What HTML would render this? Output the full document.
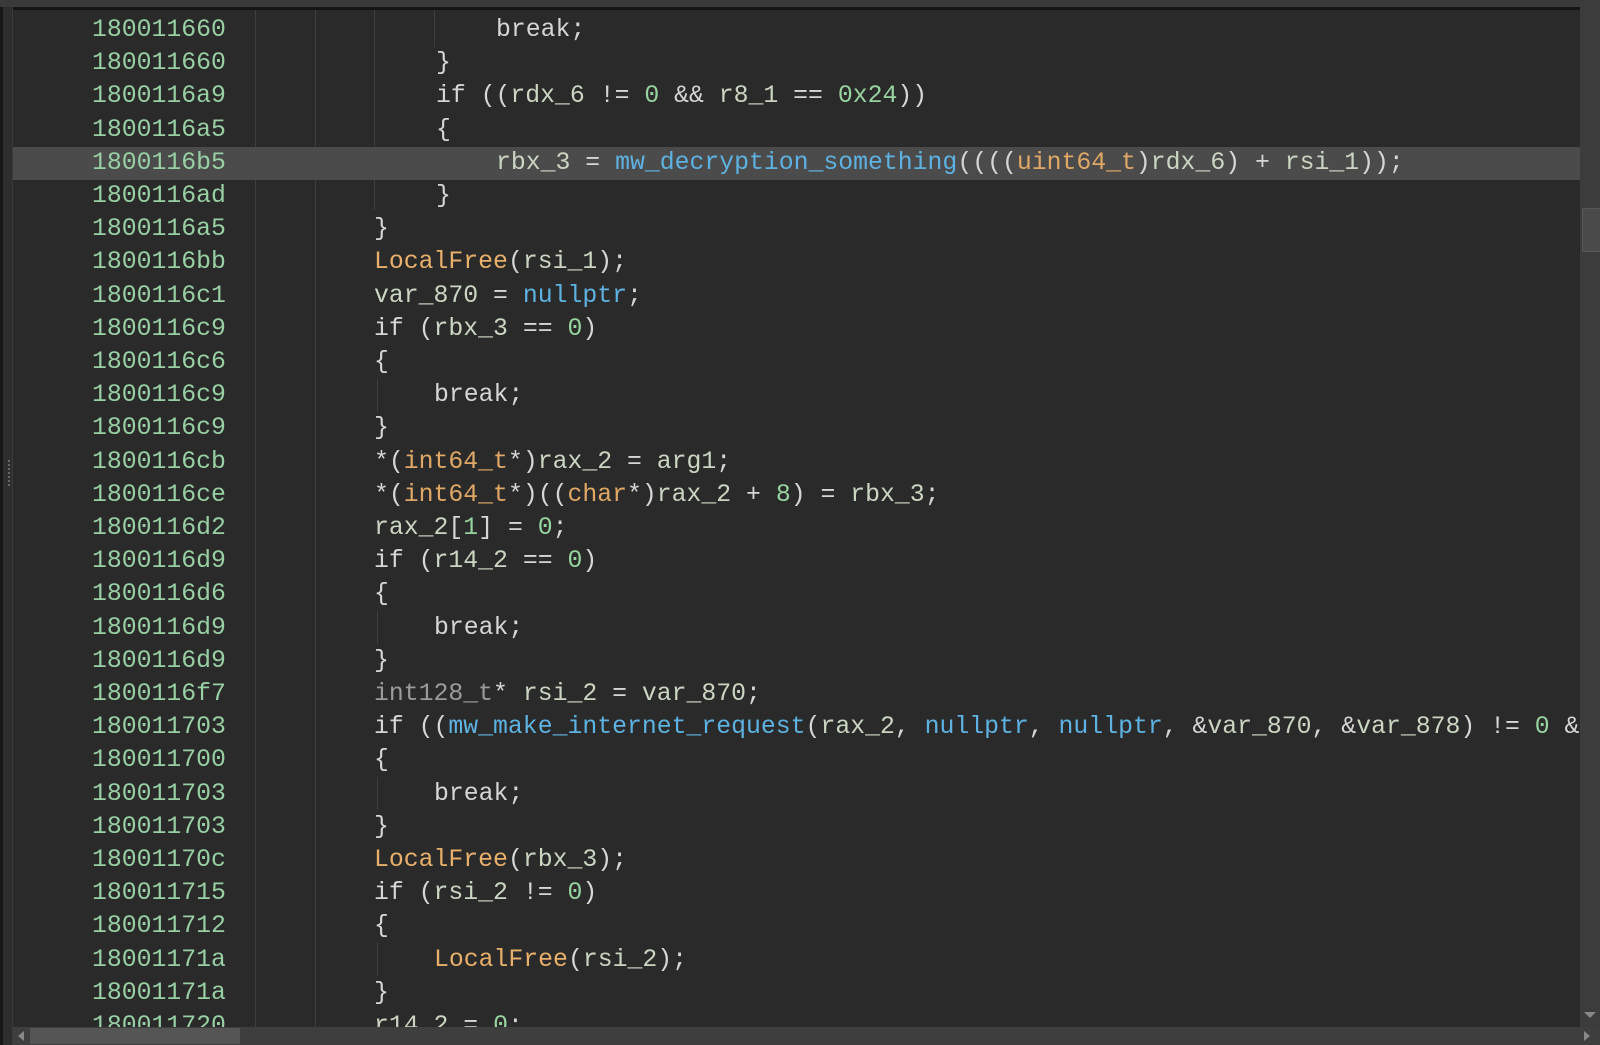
<!DOCTYPE html>
<html><head><meta charset="utf-8"><style>
html,body{margin:0;padding:0;width:1600px;height:1045px;overflow:hidden;background:#2a2a2a;}
body{position:relative;font-family:"Liberation Mono","DejaVu Sans Mono",monospace;font-size:24.8px;}
.top{position:absolute;left:0;top:0;width:1600px;height:7px;background:#3a3a3a;}
.topl{position:absolute;left:13px;top:7px;width:1567px;height:3px;background:#151515;}
.ls{position:absolute;left:0;top:0;width:3px;height:1045px;background:#161616;}
.ls2{position:absolute;left:3px;top:0;width:9px;height:1045px;background:#2e2e2e;}
.ls3{position:absolute;left:12px;top:0;width:1px;height:1045px;background:#3a3a3a;}
.grip{position:absolute;left:8px;top:460px;width:2px;height:28px;background:repeating-linear-gradient(#666 0 2px,transparent 2px 4px);}
.wrap{position:absolute;left:0;top:3px;width:1600px;height:1024px;}
.row{position:absolute;left:13px;width:1567px;height:33.2px;line-height:33.2px;white-space:pre;color:#d6d6d6;}
.hl{background:#4b4b4b;}
.a{position:absolute;left:79px;color:#98d0a4;}
.c{position:absolute;}
.g{position:absolute;width:1px;background:#3f3f3f;}
.v{color:#cad6c2}.n{color:#98d4a0}.t{color:#e0a866}.f{color:#e8b06a}.b{color:#5eb2e2}.gr{color:#9a9a9a}
.rsb{position:absolute;left:1580px;top:0;width:20px;height:1027px;background:#3c3c3c;}
.rth{position:absolute;left:1582px;top:208px;width:18px;height:42px;background:#4a4a4a;border:1px solid #555;}
.bsb{position:absolute;left:13px;top:1027px;width:1587px;height:18px;background:#3e3e3e;}
.bth{position:absolute;left:30px;top:1028px;width:210px;height:16px;background:#555;}
</style></head><body>
<div class="ls"></div><div class="ls2"></div><div class="ls3"></div><div class="grip"></div>
<div class="g" style="left:255px;top:10px;height:1017px"></div>
<div class="g" style="left:315px;top:10px;height:1017px"></div>
<div class="wrap">
<div class="g" style="left:374px;top:7px;height:200px"></div>
<div class="g" style="left:434px;top:7px;height:37px"></div>
<div class="g" style="left:434px;top:144px;height:33px"></div>
<div class="g" style="left:377px;top:376px;height:33px"></div>
<div class="g" style="left:377px;top:608px;height:33px"></div>
<div class="g" style="left:377px;top:774px;height:33px"></div>
<div class="g" style="left:377px;top:940px;height:33px"></div>
<div class="row" style="top:11px"><span class="a">180011660</span><span class="c" style="left:483px">break;</span></div>
<div class="row" style="top:44.2px"><span class="a">180011660</span><span class="c" style="left:423px">}</span></div>
<div class="row" style="top:77.4px"><span class="a">1800116a9</span><span class="c" style="left:423px">if ((<span class="v">rdx_6</span> != <span class="n">0</span> &amp;&amp; <span class="v">r8_1</span> == <span class="n">0x24</span>))</span></div>
<div class="row" style="top:110.6px"><span class="a">1800116a5</span><span class="c" style="left:423px">{</span></div>
<div class="row hl" style="top:143.8px"><span class="a">1800116b5</span><span class="c" style="left:483px"><span class="v">rbx_3</span> = <span class="b">mw_decryption_something</span>((((<span class="t">uint64_t</span>)<span class="v">rdx_6</span>) + <span class="v">rsi_1</span>));</span></div>
<div class="row" style="top:177px"><span class="a">1800116ad</span><span class="c" style="left:423px">}</span></div>
<div class="row" style="top:210.2px"><span class="a">1800116a5</span><span class="c" style="left:361px">}</span></div>
<div class="row" style="top:243.4px"><span class="a">1800116bb</span><span class="c" style="left:361px"><span class="f">LocalFree</span>(<span class="v">rsi_1</span>);</span></div>
<div class="row" style="top:276.6px"><span class="a">1800116c1</span><span class="c" style="left:361px"><span class="v">var_870</span> = <span class="b">nullptr</span>;</span></div>
<div class="row" style="top:309.8px"><span class="a">1800116c9</span><span class="c" style="left:361px">if (<span class="v">rbx_3</span> == <span class="n">0</span>)</span></div>
<div class="row" style="top:343px"><span class="a">1800116c6</span><span class="c" style="left:361px">{</span></div>
<div class="row" style="top:376.2px"><span class="a">1800116c9</span><span class="c" style="left:421px">break;</span></div>
<div class="row" style="top:409.4px"><span class="a">1800116c9</span><span class="c" style="left:361px">}</span></div>
<div class="row" style="top:442.6px"><span class="a">1800116cb</span><span class="c" style="left:361px">*(<span class="t">int64_t</span>*)<span class="v">rax_2</span> = <span class="v">arg1</span>;</span></div>
<div class="row" style="top:475.8px"><span class="a">1800116ce</span><span class="c" style="left:361px">*(<span class="t">int64_t</span>*)((<span class="t">char</span>*)<span class="v">rax_2</span> + <span class="n">8</span>) = <span class="v">rbx_3</span>;</span></div>
<div class="row" style="top:509px"><span class="a">1800116d2</span><span class="c" style="left:361px"><span class="v">rax_2</span>[<span class="n">1</span>] = <span class="n">0</span>;</span></div>
<div class="row" style="top:542.2px"><span class="a">1800116d9</span><span class="c" style="left:361px">if (<span class="v">r14_2</span> == <span class="n">0</span>)</span></div>
<div class="row" style="top:575.4px"><span class="a">1800116d6</span><span class="c" style="left:361px">{</span></div>
<div class="row" style="top:608.6px"><span class="a">1800116d9</span><span class="c" style="left:421px">break;</span></div>
<div class="row" style="top:641.8px"><span class="a">1800116d9</span><span class="c" style="left:361px">}</span></div>
<div class="row" style="top:675px"><span class="a">1800116f7</span><span class="c" style="left:361px"><span class="gr">int128_t</span>* <span class="v">rsi_2</span> = <span class="v">var_870</span>;</span></div>
<div class="row" style="top:708.2px"><span class="a">180011703</span><span class="c" style="left:361px">if ((<span class="b">mw_make_internet_request</span>(<span class="v">rax_2</span>, <span class="b">nullptr</span>, <span class="b">nullptr</span>, &amp;<span class="v">var_870</span>, &amp;<span class="v">var_878</span>) != <span class="n">0</span> &amp;&amp;</span></div>
<div class="row" style="top:741.4px"><span class="a">180011700</span><span class="c" style="left:361px">{</span></div>
<div class="row" style="top:774.6px"><span class="a">180011703</span><span class="c" style="left:421px">break;</span></div>
<div class="row" style="top:807.8px"><span class="a">180011703</span><span class="c" style="left:361px">}</span></div>
<div class="row" style="top:841px"><span class="a">18001170c</span><span class="c" style="left:361px"><span class="f">LocalFree</span>(<span class="v">rbx_3</span>);</span></div>
<div class="row" style="top:874.2px"><span class="a">180011715</span><span class="c" style="left:361px">if (<span class="v">rsi_2</span> != <span class="n">0</span>)</span></div>
<div class="row" style="top:907.4px"><span class="a">180011712</span><span class="c" style="left:361px">{</span></div>
<div class="row" style="top:940.6px"><span class="a">18001171a</span><span class="c" style="left:421px"><span class="f">LocalFree</span>(<span class="v">rsi_2</span>);</span></div>
<div class="row" style="top:973.8px"><span class="a">18001171a</span><span class="c" style="left:361px">}</span></div>
<div class="row" style="top:1007px"><span class="a">180011720</span><span class="c" style="left:361px"><span class="v">r14_2</span> = <span class="n">0</span>;</span></div>
</div>
<div class="top"></div><div class="topl"></div>
<div class="rsb"></div><div class="rth"></div>
<div style="position:absolute;left:1584px;top:1012px;width:0;height:0;border-left:6px solid transparent;border-right:6px solid transparent;border-top:6px solid #888"></div>
<div class="bsb"></div><div class="bth"></div>
<div style="position:absolute;left:18px;top:1031px;width:0;height:0;border-top:5px solid transparent;border-bottom:5px solid transparent;border-right:6px solid #888"></div>
<div style="position:absolute;left:1584px;top:1031px;width:0;height:0;border-top:5px solid transparent;border-bottom:5px solid transparent;border-left:6px solid #888"></div>
</body></html>
